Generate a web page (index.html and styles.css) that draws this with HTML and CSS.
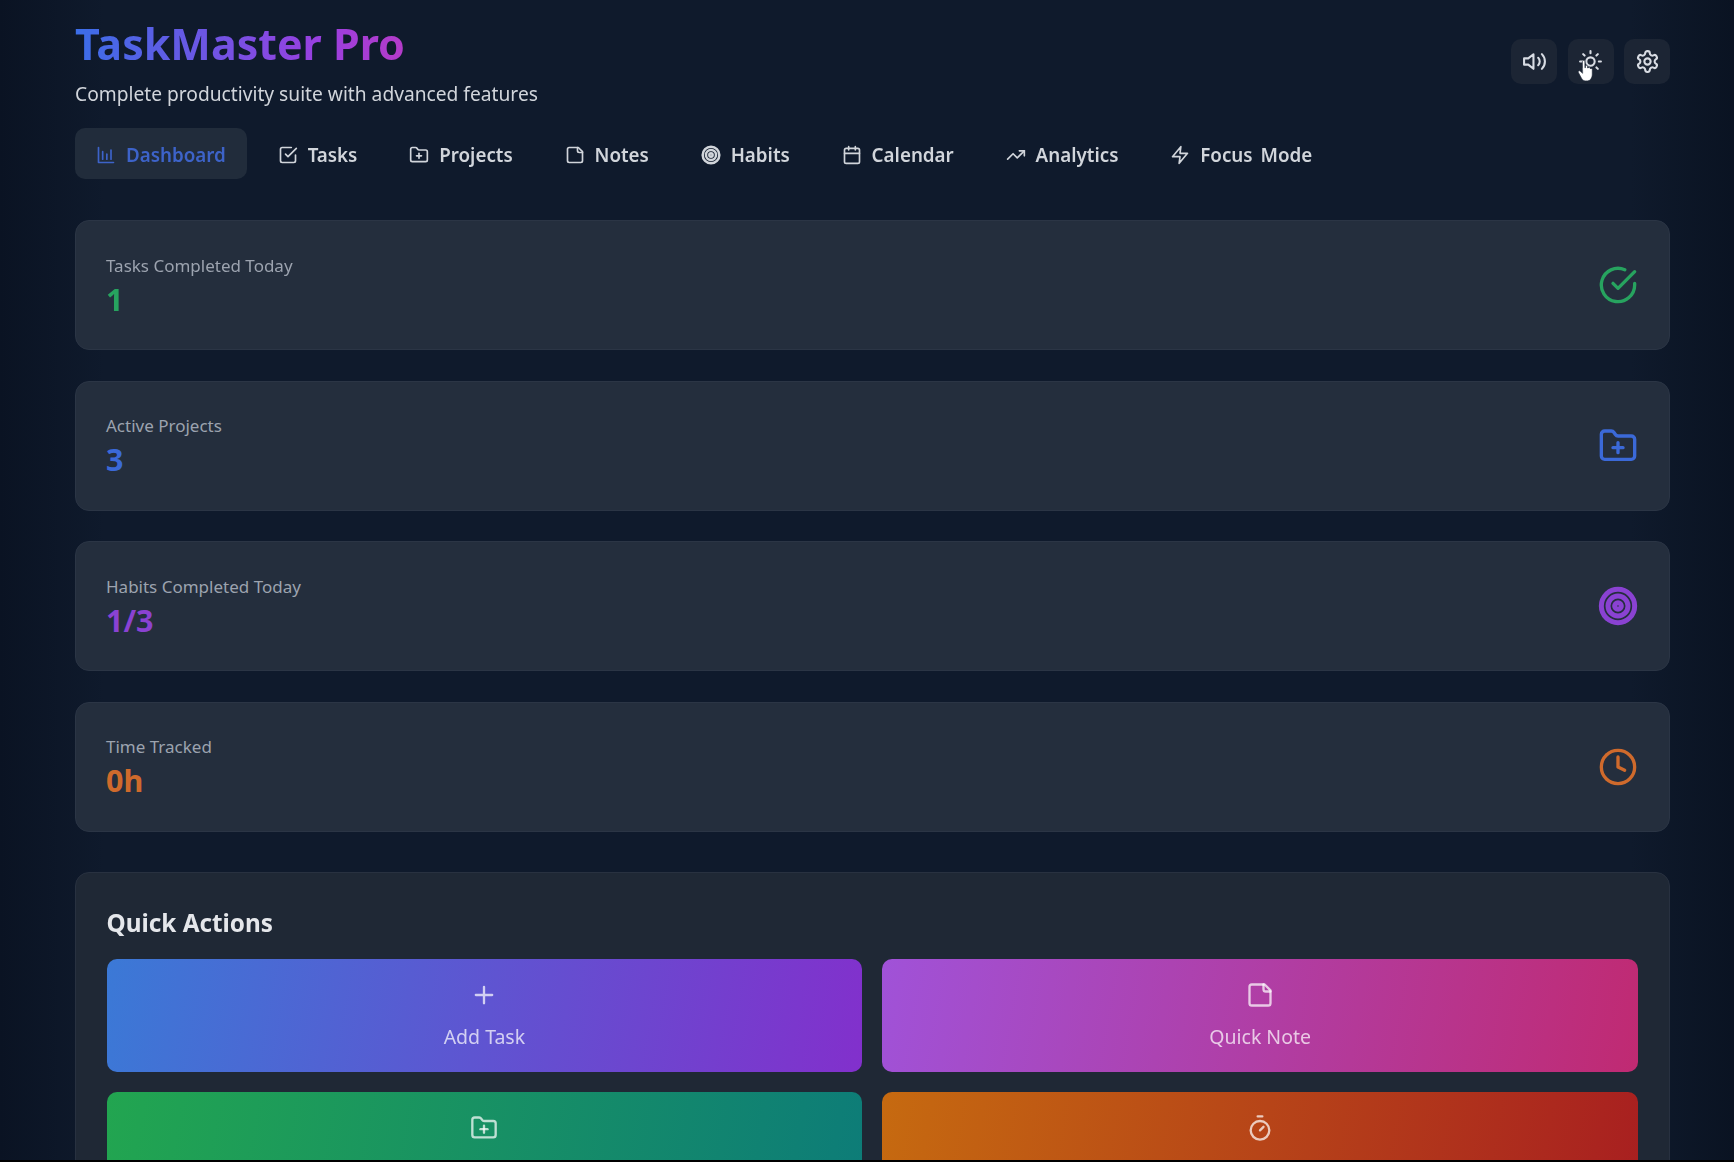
FILE: index.html
```html
<!DOCTYPE html>
<html>
<head>
  <title>TaskMaster Pro</title>
  <link rel="stylesheet" href="styles.css">
</head>
<body>

<svg class="sprite" xmlns="http://www.w3.org/2000/svg">
  <symbol id="i-volume" viewBox="0 0 24 24"><polygon points="11 5 6 9 2 9 2 15 6 15 11 19 11 5"/><path d="M15.54 8.46a5 5 0 0 1 0 7.07"/><path d="M19.07 4.93a10 10 0 0 1 0 14.14"/></symbol>
  <symbol id="i-sun" viewBox="0 0 24 24"><circle cx="12" cy="12" r="4"/><path d="M12 2v2M12 20v2M4.93 4.93l1.41 1.41M17.66 17.66l1.41 1.41M2 12h2M20 12h2M6.34 17.66l-1.41 1.41M19.07 4.93l-1.41 1.41"/></symbol>
  <symbol id="i-settings" viewBox="0 0 24 24"><path d="M12.22 2h-.44a2 2 0 0 0-2 2v.18a2 2 0 0 1-1 1.73l-.43.25a2 2 0 0 1-2 0l-.15-.08a2 2 0 0 0-2.73.73l-.22.38a2 2 0 0 0 .73 2.73l.15.1a2 2 0 0 1 1 1.72v.51a2 2 0 0 1-1 1.74l-.15.09a2 2 0 0 0-.73 2.73l.22.38a2 2 0 0 0 2.73.73l.15-.08a2 2 0 0 1 2 0l.43.25a2 2 0 0 1 1 1.73V20a2 2 0 0 0 2 2h.44a2 2 0 0 0 2-2v-.18a2 2 0 0 1 1-1.73l.43-.25a2 2 0 0 1 2 0l.15.08a2 2 0 0 0 2.73-.73l.22-.39a2 2 0 0 0-.73-2.73l-.15-.08a2 2 0 0 1-1-1.74v-.5a2 2 0 0 1 1-1.74l.15-.09a2 2 0 0 0 .73-2.73l-.22-.38a2 2 0 0 0-2.73-.73l-.15.08a2 2 0 0 1-2 0l-.43-.25a2 2 0 0 1-1-1.73V4a2 2 0 0 0-2-2z"/><circle cx="12" cy="12" r="3"/></symbol>
  <symbol id="i-chart" viewBox="0 0 24 24"><path d="M3 3v18h18"/><path d="M8 17V8"/><path d="M13 17v-6"/><path d="M18 17V6"/></symbol>
  <symbol id="i-tasks" viewBox="0 0 24 24"><path d="m9 11 3 3L22 4"/><path d="M21 12v7a2 2 0 0 1-2 2H5a2 2 0 0 1-2-2V5a2 2 0 0 1 2-2h11"/></symbol>
  <symbol id="i-folder" viewBox="0 0 24 24"><path d="M12 10v6"/><path d="M9 13h6"/><path d="M20 20a2 2 0 0 0 2-2V8a2 2 0 0 0-2-2h-7.9a2 2 0 0 1-1.69-.9L9.6 3.9A2 2 0 0 0 7.93 3H4a2 2 0 0 0-2 2v13a2 2 0 0 0 2 2Z"/></symbol>
  <symbol id="i-note" viewBox="0 0 24 24"><path d="M16 3H5a2 2 0 0 0-2 2v14a2 2 0 0 0 2 2h14a2 2 0 0 0 2-2V8Z"/><path d="M15 3v4a2 2 0 0 0 2 2h4"/></symbol>
  <symbol id="i-target" viewBox="0 0 24 24"><circle cx="12" cy="12" r="10"/><circle cx="12" cy="12" r="6"/><circle cx="12" cy="12" r="2"/></symbol>
  <symbol id="i-calendar" viewBox="0 0 24 24"><rect x="3" y="4" width="18" height="18" rx="2"/><path d="M16 2v4M8 2v4M3 10h18"/></symbol>
  <symbol id="i-trend" viewBox="0 0 24 24"><polyline points="22 7 13.5 15.5 8.5 10.5 2 17"/><polyline points="16 7 22 7 22 13"/></symbol>
  <symbol id="i-zap" viewBox="0 0 24 24"><polygon points="13 2 3 14 12 14 11 22 21 10 12 10 13 2"/></symbol>
  <symbol id="i-check" viewBox="0 0 24 24"><path d="M22 11.08V12a10 10 0 1 1-5.93-9.14"/><path d="m9 11 3 3L22 4"/></symbol>
  <symbol id="i-clock" viewBox="0 0 24 24"><circle cx="12" cy="12" r="10"/><polyline points="12 6 12 12 16 14"/></symbol>
  <symbol id="i-plus" viewBox="0 0 24 24"><path d="M5 12h14M12 5v14"/></symbol>
  <symbol id="i-timer" viewBox="0 0 24 24"><path d="M10 2h4M12 14l3-3"/><circle cx="12" cy="14" r="8"/></symbol>
</svg>

<div class="app">
  <header class="top">
    <div>
      <h1 class="logo">TaskMaster Pro</h1>
      <p class="tagline">Complete productivity suite with advanced features</p>
    </div>
    <div class="top-btns">
      <button class="icon-btn"><svg class="ico-lg"><use href="#i-volume"/></svg></button>
      <button class="icon-btn">
        <svg class="ico-lg"><use href="#i-sun"/></svg>
        <svg class="pointer" viewBox="0 0 16 24"><path d="M5 2.5c0-1.6 2.4-1.600 2.400 0v6l.6-.2V7c0-1.300 2-1.300 2 0v1.600l.6 0c.2-1.100 2-1 2 .2v.8c.3-.9 1.900-.7 1.900.5v4.400c0 3-1.500 6.500-4.600 6.500H8c-2 0-3-1-4-2.800L1.200 13c-.7-1.200.8-2.300 1.800-1.300L5 13.500z"/></svg>
      </button>
      <button class="icon-btn"><svg class="ico-lg"><use href="#i-settings"/></svg></button>
    </div>
  </header>

  <nav class="nav">
    <a class="nav-item active"><svg class="ico"><use href="#i-chart"/></svg>Dashboard</a>
    <a class="nav-item"><svg class="ico"><use href="#i-tasks"/></svg>Tasks</a>
    <a class="nav-item"><svg class="ico"><use href="#i-folder"/></svg>Projects</a>
    <a class="nav-item"><svg class="ico"><use href="#i-note"/></svg>Notes</a>
    <a class="nav-item"><svg class="ico dense"><use href="#i-target"/></svg>Habits</a>
    <a class="nav-item"><svg class="ico"><use href="#i-calendar"/></svg>Calendar</a>
    <a class="nav-item"><svg class="ico"><use href="#i-trend"/></svg>Analytics</a>
    <a class="nav-item"><svg class="ico"><use href="#i-zap"/></svg>Focus Mode</a>
  </nav>

  <section class="stats">
    <div class="stat green">
      <div class="stat-text">
        <div class="stat-label">Tasks Completed Today</div>
        <div class="stat-value">1</div>
      </div>
      <svg class="stat-ico"><use href="#i-check"/></svg>
    </div>
    <div class="stat blue">
      <div class="stat-text">
        <div class="stat-label">Active Projects</div>
        <div class="stat-value">3</div>
      </div>
      <svg class="stat-ico"><use href="#i-folder"/></svg>
    </div>
    <div class="stat purple">
      <div class="stat-text">
        <div class="stat-label">Habits Completed Today</div>
        <div class="stat-value">1/3</div>
      </div>
      <svg class="stat-ico dense"><use href="#i-target"/></svg>
    </div>
    <div class="stat orange">
      <div class="stat-text">
        <div class="stat-label">Time Tracked</div>
        <div class="stat-value">0h</div>
      </div>
      <svg class="stat-ico"><use href="#i-clock"/></svg>
    </div>
  </section>

  <section class="panel">
    <h2 class="panel-title">Quick Actions</h2>
    <div class="actions">
      <button class="action a-blue"><svg class="action-ico"><use href="#i-plus"/></svg>Add Task</button>
      <button class="action a-pink"><svg class="action-ico"><use href="#i-note"/></svg>Quick Note</button>
      <button class="action a-green"><svg class="action-ico"><use href="#i-folder"/></svg></button>
      <button class="action a-orange"><svg class="action-ico"><use href="#i-timer"/></svg></button>
    </div>
  </section>
</div>

</body>
</html>
```

FILE: styles.css
```css
html {
  background: #000;
}

body {
  margin: 0;
  height: 1160px;
  overflow: hidden;
  font-family: 'Noto Sans', 'Open Sans', sans-serif;
  color: #e5e7eb;
  background: linear-gradient(90deg, #0a1323 0%, #0f1a2c 6%, #0f1a2c 94%, #0a1322 100%);
}

.sprite {
  display: none;
}

.app {
  padding: 0 64px 0 75px;
  filter: blur(0.7px);
}

svg {
  fill: none;
  stroke: currentColor;
  stroke-width: 2;
  stroke-linecap: round;
  stroke-linejoin: round;
}

svg.dense {
  stroke-width: 3;
}

.top {
  display: flex;
  justify-content: space-between;
  align-items: flex-start;
  height: 128px;
}

.logo {
  margin: 14px 0 0 0;
  font-size: 43px;
  line-height: 60px;
  font-weight: 700;
  width: fit-content;
  background: linear-gradient(90deg, #3b6ee8, #9a3fe0 75%, #b43bc8);
  -webkit-background-clip: text;
  background-clip: text;
  color: transparent;
}

.tagline {
  margin: 6px 0 0 0;
  font-size: 19.2px;
  line-height: 28px;
  color: #d1d5db;
}

.top-btns {
  display: flex;
  gap: 10.5px;
  margin-top: 39px;
}

.icon-btn {
  position: relative;
  width: 46px;
  height: 45px;
  padding: 0;
  display: flex;
  align-items: center;
  justify-content: center;
  border: none;
  border-radius: 10px;
  background: #1c2534;
  color: #d8dce3;
}

.ico {
  width: 20px;
  height: 20px;
  flex: none;
}

.ico-lg {
  width: 25px;
  height: 25px;
}

.pointer {
  position: absolute;
  left: 9px;
  top: 20px;
  width: 17px;
  height: 25px;
  fill: #fff;
  stroke: #1d2736;
  stroke-width: 0.6;
}

.nav {
  display: flex;
  gap: 9.8px;
  height: 51px;
}

.nav-item {
  display: flex;
  align-items: center;
  gap: 10px;
  padding: 2px 21px 0 21px;
  border-radius: 10px;
  font-size: 18.8px;
  font-weight: 600;
  word-spacing: 3px;
  color: #d1d5db;
}

.nav-item.active {
  background: #212c3b;
  color: #3d63c9;
}

.stats {
  display: flex;
  flex-direction: column;
  gap: 30.5px;
  margin-top: 41px;
}

.stat {
  display: flex;
  justify-content: space-between;
  align-items: center;
  height: 130px;
  box-sizing: border-box;
  padding: 0 31px 0 30px;
  background: #242e3d;
  border: 1px solid #2b3545;
  border-radius: 14px;
}

.stat-text {
  padding-top: 3px;
}

.stat-label {
  font-size: 17px;
  line-height: 24px;
  color: #9ca3af;
}

.stat-value {
  font-size: 30.5px;
  line-height: 42px;
  font-weight: 700;
}

.stat-ico {
  width: 40px;
  height: 40px;
}

.green { color: #27a35f; }
.blue { color: #3b69d8; }
.purple { color: #8a42d2; }
.orange { color: #cf6a2c; }

.panel {
  margin-top: 40px;
  padding: 32px 31px 30px 30.5px;
  height: 400px;
  box-sizing: border-box;
  background: #1f2835;
  border: 1px solid #283140;
  border-radius: 14px;
}

.panel-title {
  margin: 0 0 18px 0;
  font-size: 24.3px;
  line-height: 36px;
  font-weight: 700;
  color: #e5e7eb;
}

.actions {
  display: grid;
  grid-template-columns: 1fr 1fr;
  gap: 20px;
}

.action {
  height: 113px;
  padding: 22px 0 0 0;
  display: flex;
  flex-direction: column;
  align-items: center;
  justify-content: flex-start;
  gap: 14px;
  border: none;
  border-radius: 10px;
  font-family: inherit;
  font-size: 19.5px;
  line-height: 28px;
  color: rgba(255, 255, 255, 0.72);
}

.action-ico {
  width: 28px;
  height: 28px;
}

.a-blue { background: linear-gradient(100deg, #3b79d6, #8230cc); }
.a-pink { background: linear-gradient(100deg, #a052d8, #c02a72); }
.a-green { background: linear-gradient(100deg, #22a550, #0d7c78); }
.a-orange { background: linear-gradient(100deg, #c66a10, #a81f20); }
```
